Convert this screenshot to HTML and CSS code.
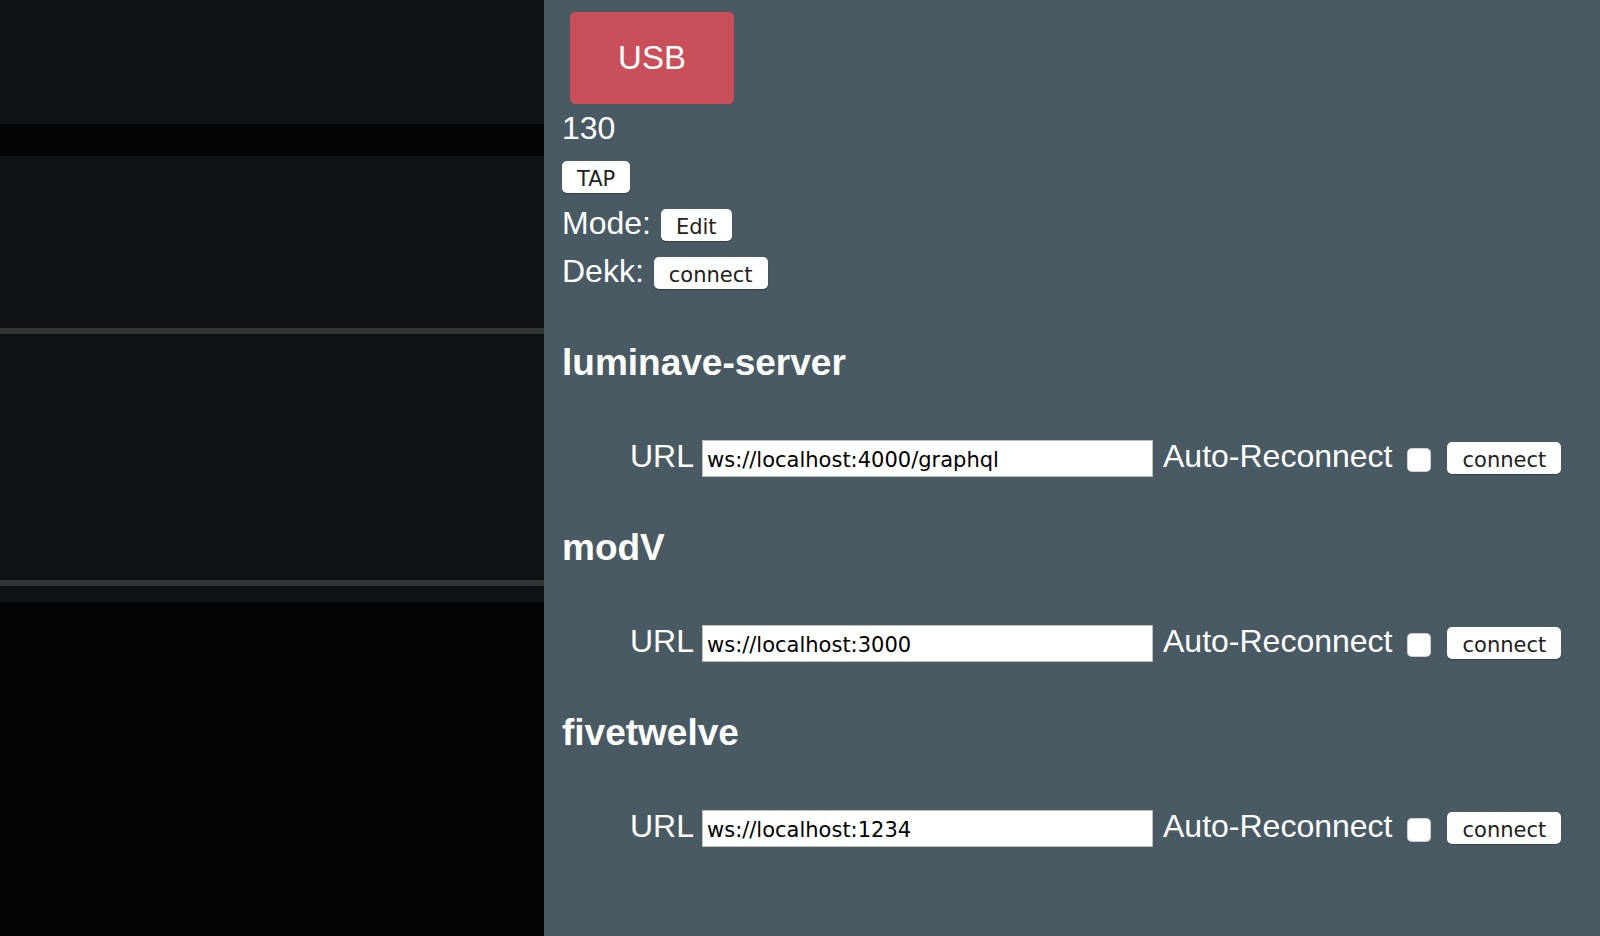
FILE: index.html
```html
<!DOCTYPE html>
<html lang="en">
<head>
    <meta charset="UTF-8">
    <title>luminave</title>
    <link rel="stylesheet" href="styles.css">
</head>
<body>
<div class="app">
    <div class="stage">
        <div class="pane pane-top"></div>
        <div class="pane pane-mid"></div>
        <div class="pane pane-big"></div>
        <div class="pane pane-small"></div>
    </div>
    <div class="side">
        <button class="usb">USB</button>
        <div class="bpm">130</div>
        <div class="line line-tap">
            <button class="btn">TAP</button>
        </div>
        <div class="line">
            <span class="label">Mode:</span>
            <button class="btn">Edit</button>
        </div>
        <div class="line line-dekk">
            <span class="label">Dekk:</span>
            <button class="btn">connect</button>
        </div>

        <div class="server server-first">
            <h2>luminave-server</h2>
            <div class="conn">
                <span class="label">URL</span>
                <input class="url" type="text" value="ws://localhost:4000/graphql">
                <span class="label auto">Auto-Reconnect</span>
                <input class="check" type="checkbox">
                <button class="btn">connect</button>
            </div>
        </div>
        <div class="server">
            <h2>modV</h2>
            <div class="conn">
                <span class="label">URL</span>
                <input class="url" type="text" value="ws://localhost:3000">
                <span class="label auto">Auto-Reconnect</span>
                <input class="check" type="checkbox">
                <button class="btn">connect</button>
            </div>
        </div>
        <div class="server">
            <h2>fivetwelve</h2>
            <div class="conn">
                <span class="label">URL</span>
                <input class="url" type="text" value="ws://localhost:1234">
                <span class="label auto">Auto-Reconnect</span>
                <input class="check" type="checkbox">
                <button class="btn">connect</button>
            </div>
        </div>
    </div>
</div>
</body>
</html>
```

FILE: styles.css
```css
*{
    margin: 0;
    padding: 0;
    box-sizing: border-box;
}
html, body{
    height: 100%;
}
body{
    background: #050505;
    font-family: "Liberation Sans", Arial, sans-serif;
    color: #fff;
    overflow: hidden;
}
.app{
    display: flex;
    height: 100%;
}

/* left side */
.stage{
    width: 544px;
    flex-shrink: 0;
    background: #050505;
}
.pane{
    background: #0e1215;
}
.pane-top{
    height: 124px;
    margin-bottom: 32px;
}
.pane-mid{
    height: 178px;
    border-bottom: 6px solid #333;
}
.pane-big{
    height: 252px;
    border-bottom: 6px solid #333;
}
.pane-small{
    height: 16px;
}

/* right side */
.side{
    flex: 1;
    background: #4a5a63;
    padding: 12px 18px;
    font-size: 32px;
    line-height: 37px;
}
.usb{
    display: block;
    width: 164px;
    height: 92px;
    margin-left: 8px;
    border: none;
    border-radius: 5px;
    background: #c9505a;
    color: #fff;
    font-family: "Liberation Sans", Arial, sans-serif;
    font-size: 33px;
}
.bpm{
    margin-top: 6px;
}
.line{
    display: flex;
    align-items: baseline;
    margin-top: 12px;
}
.line-tap{
    margin-top: 14px;
}
.line-dekk{
    margin-top: 11px;
}
.label{
    margin-right: 10px;
}
.btn{
    height: 32px;
    padding: 6px 15px 2px;
    border: none;
    border-radius: 5px;
    background: #fff;
    color: #222;
    font-family: "DejaVu Sans", sans-serif;
    font-size: 21px;
    line-height: 24px;
    box-shadow: 0 1px 1px rgba(0, 0, 0, 0.3);
}

.server{
    margin-top: 50px;
}
.server-first{
    margin-top: 52px;
}
h2{
    font-size: 37px;
    line-height: 42px;
    font-weight: bold;
}
.conn{
    display: flex;
    align-items: baseline;
    margin-top: 54px;
    padding-left: 68px;
}
.conn .label{
    margin-right: 0;
}
.url{
    width: 451px;
    height: 37px;
    margin-left: 8px;
    padding: 3px 4px 0;
    border: 1px solid #bdbdbd;
    background: #fff;
    color: #000;
    font-family: "DejaVu Sans", sans-serif;
    font-size: 21px;
    outline: none;
}
.auto{
    margin-left: 10px;
}
.check{
    -webkit-appearance: none;
    appearance: none;
    align-self: flex-start;
    width: 24px;
    height: 24px;
    margin: 10px 16px 0 15px;
    border-radius: 5px;
    background: #fff;
    box-shadow: inset 0 0 0 1px rgba(0, 0, 0, 0.18);
}
```
